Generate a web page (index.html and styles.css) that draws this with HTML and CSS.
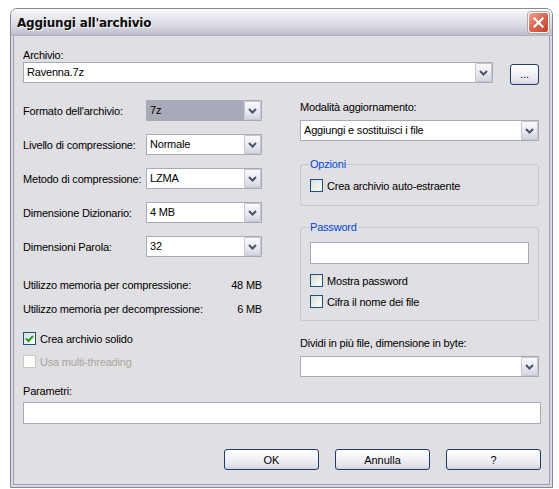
FILE: index.html
```html
<!DOCTYPE html>
<html lang="it">
<head>
<meta charset="utf-8">
<title>Aggiungi all'archivio</title>
<link rel="stylesheet" href="styles.css">
</head>
<body>
<div class="window">
  <div class="titlebar">
    <span class="title">Aggiungi all'archivio</span>
    <span class="close"><svg width="13" height="13" viewBox="0 0 13 13"><path d="M2.5 2.5 L10.5 10.5 M10.5 2.5 L2.5 10.5" stroke="#fff" stroke-width="2.2" stroke-linecap="square"/></svg></span>
  </div>
  <div class="frame">
    <div class="client">
      <div class="text-line">Archivio:</div>
      <div class="archive-row">
        <div class="combo archive"><span class="value">Ravenna.7z</span><span class="arrow"><svg width="9" height="6" viewBox="0 0 9 6"><polyline points="1,1 4.5,4.5 8,1" fill="none" stroke="#4a5468" stroke-width="2"/></svg></span></div>
        <button class="btn browse">...</button>
      </div>
      <div class="columns">
        <div class="col left">
          <div class="field-rows">
            <div class="field-row"><span class="field-label">Formato dell'archivio:</span><div class="combo small selected"><span class="value">7z</span><span class="arrow"><svg width="9" height="6" viewBox="0 0 9 6"><polyline points="1,1 4.5,4.5 8,1" fill="none" stroke="#4a5468" stroke-width="2"/></svg></span></div></div>
            <div class="field-row"><span class="field-label">Livello di compressione:</span><div class="combo small"><span class="value">Normale</span><span class="arrow"><svg width="9" height="6" viewBox="0 0 9 6"><polyline points="1,1 4.5,4.5 8,1" fill="none" stroke="#4a5468" stroke-width="2"/></svg></span></div></div>
            <div class="field-row"><span class="field-label">Metodo di compressione:</span><div class="combo small"><span class="value">LZMA</span><span class="arrow"><svg width="9" height="6" viewBox="0 0 9 6"><polyline points="1,1 4.5,4.5 8,1" fill="none" stroke="#4a5468" stroke-width="2"/></svg></span></div></div>
            <div class="field-row"><span class="field-label">Dimensione Dizionario:</span><div class="combo small"><span class="value">4 MB</span><span class="arrow"><svg width="9" height="6" viewBox="0 0 9 6"><polyline points="1,1 4.5,4.5 8,1" fill="none" stroke="#4a5468" stroke-width="2"/></svg></span></div></div>
            <div class="field-row"><span class="field-label">Dimensioni Parola:</span><div class="combo small"><span class="value">32</span><span class="arrow"><svg width="9" height="6" viewBox="0 0 9 6"><polyline points="1,1 4.5,4.5 8,1" fill="none" stroke="#4a5468" stroke-width="2"/></svg></span></div></div>
          </div>
          <div class="mem-rows">
            <div class="mem-row"><span>Utilizzo memoria per compressione:</span><span>48 MB</span></div>
            <div class="mem-row"><span>Utilizzo memoria per decompressione:</span><span>6 MB</span></div>
          </div>
          <label class="check solid"><span class="box"><svg width="11" height="11" viewBox="0 0 11 11"><polyline points="2,5.5 4.5,8 9,3" fill="none" stroke="#21a121" stroke-width="2"/></svg></span><span>Crea archivio solido</span></label>
          <label class="check disabled multi"><span class="box"></span><span>Usa multi-threading</span></label>
        </div>
        <div class="col right">
          <div class="text-line mode-label">Modalità aggiornamento:</div>
          <div class="combo full mode"><span class="value">Aggiungi e sostituisci i file</span><span class="arrow"><svg width="9" height="6" viewBox="0 0 9 6"><polyline points="1,1 4.5,4.5 8,1" fill="none" stroke="#4a5468" stroke-width="2"/></svg></span></div>
          <fieldset class="group options">
            <legend>Opzioni</legend>
            <label class="check"><span class="box"></span><span>Crea archivio auto-estraente</span></label>
          </fieldset>
          <fieldset class="group password">
            <legend>Password</legend>
            <div class="textbox pw"></div>
            <label class="check show"><span class="box"></span><span>Mostra password</span></label>
            <label class="check encrypt"><span class="box"></span><span>Cifra il nome dei file</span></label>
          </fieldset>
          <div class="text-line split-label">Dividi in più file, dimensione in byte:</div>
          <div class="combo full split"><span class="value"></span><span class="arrow"><svg width="9" height="6" viewBox="0 0 9 6"><polyline points="1,1 4.5,4.5 8,1" fill="none" stroke="#4a5468" stroke-width="2"/></svg></span></div>
        </div>
      </div>
      <div class="text-line params-label">Parametri:</div>
      <div class="textbox params"></div>
      <div class="buttons">
        <button class="btn">OK</button>
        <button class="btn">Annulla</button>
        <button class="btn">?</button>
      </div>
    </div>
  </div>
</div>
</body>
</html>
```

FILE: styles.css
```css
html, body {
  margin: 0;
  background: #ffffff;
}
body {
  padding: 8px 6px 0 10px;
  font-family: "Liberation Sans", Arial, sans-serif;
  font-size: 11px;
  letter-spacing: -0.2px;
  color: #000;
}
.window {
  width: 543px;
  height: 480px;
  box-sizing: border-box;
  border: 1px solid #85879a;
  border-radius: 7px 7px 0 0;
  background: #e0dfe3;
  display: flex;
  flex-direction: column;
  overflow: hidden;
}
.titlebar {
  height: 27px;
  flex: none;
  display: flex;
  align-items: center;
  justify-content: space-between;
  padding: 0 3px 0 6px;
  background: linear-gradient(#fefeff 0%, #f0f0f5 15%, #e2e2ea 45%, #d0d0dc 75%, #bdbdcc 95%, #a9aabb 100%);
}
.title {
  font-family: "DejaVu Sans", sans-serif;
  font-weight: bold;
  font-size: 12px;
  color: #0c0c0c;
  letter-spacing: -0.2px;
  text-shadow: 1px 1px 0 #f4f4f8;
}
.close {
  width: 19px;
  height: 19px;
  border: 1px solid #ffffff;
  border-radius: 3px;
  background: linear-gradient(135deg, #f0a493 0%, #dd6a52 45%, #c1422a 100%);
  box-shadow: 0 0 0 1px #b8a8a8;
  display: flex;
  align-items: center;
  justify-content: center;
}
.frame {
  flex: 1;
  display: flex;
  padding: 0 2px 2px;
  background: #d9d9e3;
}
.client {
  flex: 1;
  border: 1px solid #9d9eb0;
  border-top: none;
  background: #e0dfe3;
  padding: 13px 8px 0 9px;
}
.text-line {
  height: 13px;
  line-height: 13px;
  white-space: nowrap;
}
.archive-row {
  margin-top: 0;
  display: flex;
  align-items: flex-start;
}
.combo {
  box-sizing: border-box;
  height: 21px;
  border: 1px solid #a5acb5;
  background: #fff;
  display: flex;
  align-items: stretch;
}
.combo .value {
  flex: 1;
  padding-left: 3px;
  line-height: 19px;
  white-space: nowrap;
  overflow: hidden;
}
.combo.selected .value {
  background: #a9aab9;
}
.combo .arrow {
  box-sizing: border-box;
  width: 17px;
  flex: none;
  border: 1px solid #c4c6d6;
  border-radius: 1px;
  background: linear-gradient(#fbfbfd, #e6e6ee 60%, #d4d4e0);
  display: flex;
  align-items: center;
  justify-content: center;
}
.combo.archive {
  width: 470px;
}
.combo.small {
  width: 116px;
}
.combo.full {
  width: 239px;
}
.btn {
  box-sizing: border-box;
  height: 21px;
  border: 1px solid #1f3c6c;
  border-radius: 3px;
  background: linear-gradient(#ffffff, #f4f4f8 40%, #e4e4ec 80%, #d2d2de);
  font-family: "Liberation Sans", Arial, sans-serif;
  font-size: 11px;
  color: #000;
  padding: 0;
}
.browse {
  width: 29px;
  margin: 2px 0 0 17px;
  line-height: 15px;
}
.columns {
  margin-top: 15px;
  display: grid;
  grid-template-columns: 239px 239px;
  column-gap: 38px;
  align-items: start;
}
.field-rows {
  display: flex;
  flex-direction: column;
  gap: 13px;
}
.field-row {
  display: flex;
  align-items: center;
}
.field-label {
  width: 123px;
  white-space: nowrap;
}
.mem-rows {
  margin-top: 22px;
  display: flex;
  flex-direction: column;
  gap: 11px;
}
.mem-row {
  height: 13px;
  line-height: 13px;
  display: flex;
  justify-content: space-between;
  white-space: nowrap;
}
.check {
  display: flex;
  align-items: center;
  height: 13px;
  white-space: nowrap;
}
.check .box {
  box-sizing: border-box;
  width: 13px;
  height: 13px;
  flex: none;
  margin-right: 4px;
  border: 1px solid #1c5180;
  background: linear-gradient(135deg, #dcdcd7 0%, #f0f0ec 60%, #ffffff 100%);
  display: flex;
  align-items: center;
  justify-content: center;
}
.check.disabled {
  color: #aca899;
}
.check.disabled .box {
  border-color: #cac8bb;
  background: #ffffff;
}
.check.solid {
  margin-top: 16px;
}
.check.multi {
  margin-top: 10px;
}
.mode-label {
  margin-top: 1px;
}
.combo.mode {
  margin-top: 6px;
}
.group {
  margin: 0;
  padding: 0 9px 13px 9px;
  border: 1px solid #c6c5cc;
  border-radius: 3px;
}
.group legend {
  padding: 0 1px;
  margin-left: -1px;
  line-height: 13px;
  color: #0046d5;
}
.options {
  margin-top: 17px;
}
.options .check {
  margin-top: 8px;
}
.password {
  margin-top: 15px;
  padding-bottom: 12px;
}
.textbox {
  box-sizing: border-box;
  border: 1px solid #a5acb5;
  background: #fff;
  height: 22px;
}
.textbox.pw {
  margin-top: 8px;
}
.check.show {
  margin-top: 10px;
}
.check.encrypt {
  margin-top: 8px;
}
.split-label {
  margin-top: 16px;
}
.combo.split {
  margin-top: 6px;
}
.params-label {
  margin-top: 8px;
}
.textbox.params {
  margin-top: 4px;
}
.buttons {
  margin-top: 25px;
  display: flex;
  justify-content: flex-end;
  gap: 16px;
}
.buttons .btn {
  width: 95px;
}
```
